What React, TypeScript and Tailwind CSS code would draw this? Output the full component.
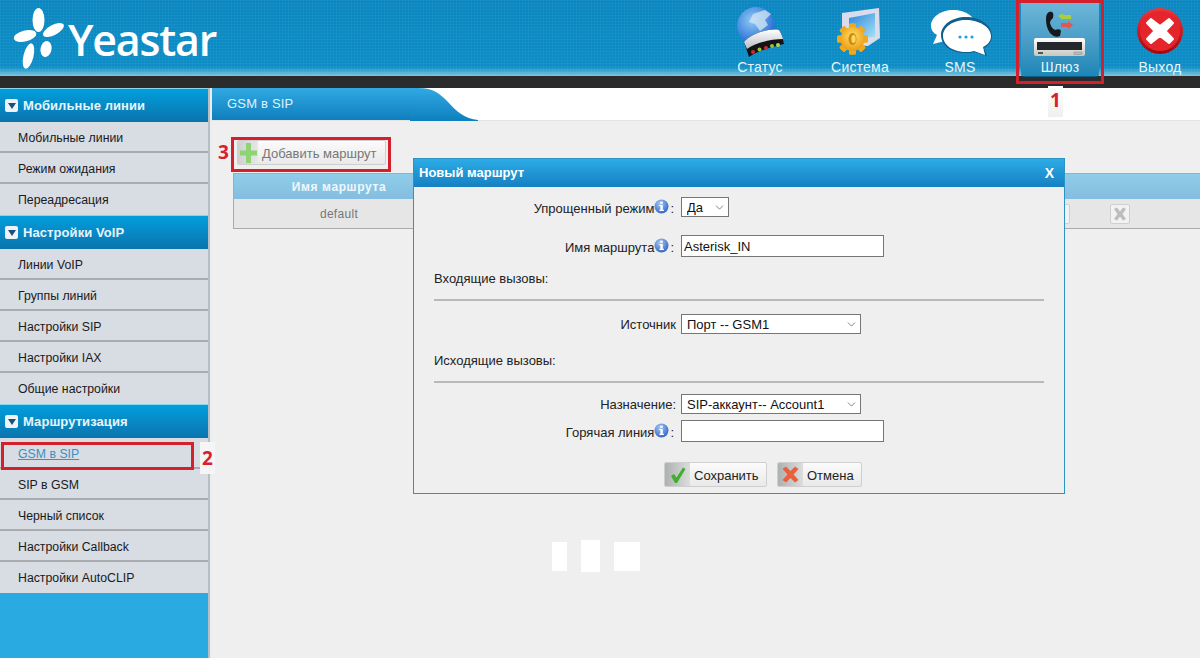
import { ChevronDown } from "lucide-react";

const sections = [
  { title: "Мобильные линии", items: ["Мобильные линии", "Режим ожидания", "Переадресация"] },
  { title: "Настройки VoIP", items: ["Линии VoIP", "Группы линий", "Настройки SIP", "Настройки IAX", "Общие настройки"] },
  { title: "Маршрутизация", items: ["GSM в SIP", "SIP в GSM", "Черный список", "Настройки Callback", "Настройки AutoCLIP"] },
];

const gearTeeth = [0, 45, 90, 135, 180, 225, 270, 315];

function Logo() {
  return (
    <div className="flex items-start pl-[14px] pt-[8px]">
      <svg width="54" height="62" viewBox="14 8 54 62" className="shrink-0">
        <g fill="#fff">
          <ellipse cx="38.5" cy="20" rx="6" ry="12" />
          <ellipse cx="25" cy="36" rx="11.5" ry="5.5" transform="rotate(-14 25 36)" />
          <ellipse cx="53.5" cy="30" rx="11.5" ry="5" transform="rotate(-28 53.5 30)" />
          <ellipse cx="28.5" cy="56" rx="5" ry="13" transform="rotate(14 28.5 56)" />
          <ellipse cx="46" cy="49" rx="5.5" ry="8" transform="rotate(10 46 49)" />
        </g>
      </svg>
      <span className="font-['Open_Sans'] text-[43px] leading-none text-white tracking-[-1.2px] font-semibold mt-[10px]">Yeastar</span>
    </div>
  );
}

function StatusIcon() {
  return (
    <svg width="78" height="57" viewBox="721 2 78 57">
      <defs>
        <radialGradient id="globe" cx="40%" cy="35%" r="70%">
          <stop offset="0" stopColor="#8ecbf5" />
          <stop offset="1" stopColor="#1c62d0" />
        </radialGradient>
        <linearGradient id="router" x1="0" y1="0" x2="0" y2="1">
          <stop offset="0" stopColor="#ffffff" />
          <stop offset="1" stopColor="#b9bcc0" />
        </linearGradient>
      </defs>
      <circle cx="756" cy="26" r="19" fill="url(#globe)" />
      <path d="M753 14 L765 10 L771 14 L765 20 L768 25 L760 31 L755 24 L749 22 Z" fill="#d5e6f3" opacity="0.75" />
      <path d="M744 42 C752 33 770 28 779 30 C782 34 783 40 784 44 C772 47 757 51 749 57 Z" fill="#141417" />
      <path d="M744 42 C752 33 770 28 779 30 C781 33 782 36 783 39 C771 39 755 43 747 49 Z" fill="url(#router)" />
      <circle cx="753" cy="52" r="2" fill="#d42a2a" />
      <circle cx="759.5" cy="49.5" r="2" fill="#9ac13a" />
      <circle cx="766" cy="48" r="2" fill="#d42a2a" />
      <circle cx="772" cy="46" r="2" fill="#9ac13a" />
      <circle cx="778" cy="45" r="2" fill="#b9d24a" />
    </svg>
  );
}

function SystemIcon() {
  return (
    <svg width="78" height="57" viewBox="821 2 78 57">
      <defs>
        <linearGradient id="screen" x1="0" y1="0" x2="1" y2="1">
          <stop offset="0" stopColor="#2a86dc" />
          <stop offset="1" stopColor="#a8e0f5" />
        </linearGradient>
        <radialGradient id="gear" cx="50%" cy="40%" r="60%">
          <stop offset="0" stopColor="#ffdf6a" />
          <stop offset="1" stopColor="#eb9c12" />
        </radialGradient>
      </defs>
      <path d="M842 13 L879 8 L880 38 L868 46 L842 44 Z" fill="#d8dcec" />
      <path d="M849 18 L875 13 L875 37 L849 38 Z" fill="url(#screen)" />
      <g fill="#f0a81c">
        {gearTeeth.map((a) => (
          <rect key={a} x="849" y="23.5" width="7" height="31" rx="1.5" transform={"rotate(" + a + " 852.5 39)"} />
        ))}
      </g>
      <circle cx="852.5" cy="39" r="12" fill="url(#gear)" />
      <ellipse cx="852.5" cy="39" rx="4" ry="6" fill="#c98a10" />
      <ellipse cx="853.5" cy="39" rx="2.2" ry="4" fill="#ffd75a" />
    </svg>
  );
}

function SmsIcon() {
  return (
    <svg width="78" height="57" viewBox="921 2 78 57">
      <path d="M953 10 C966 10 976 17 976 27 C976 37 966 42 953 42 C950 42 947 42 945 41 L933 44 L937 35 C933 33 931 30 931 26 C931 17 941 10 953 10 Z" fill="#fff" />
      <path d="M966 17 C980 17 992 25 992 36 C992 42 988 46 984 48 L987 56 L974 52 C971 53 968 53 966 53 C952 53 941 46 941 35 C941 25 952 17 966 17 Z" fill="#0f5f8c" />
      <path d="M966 20 C979 20 991 27 991 36 C991 42 987 45 983 47 L985 55 L974 51 C971 52 968 52 966 52 C953 52 943 45 943 36 C943 27 953 20 966 20 Z" fill="#fff" />
      <circle cx="960" cy="37" r="1.6" fill="#2a9fd6" />
      <circle cx="966" cy="37" r="1.6" fill="#2a9fd6" />
      <circle cx="972" cy="37" r="1.6" fill="#2a9fd6" />
    </svg>
  );
}

function GatewayIcon() {
  return (
    <svg width="78" height="57" viewBox="1021 2 78 57">
      <defs>
        <linearGradient id="box" x1="0" y1="0" x2="0" y2="1">
          <stop offset="0" stopColor="#ffffff" />
          <stop offset="1" stopColor="#c8c8c0" />
        </linearGradient>
      </defs>
      <path d="M1049 12 C1053 11 1054 13 1053 18 C1051 20 1050 21 1050 23 C1051 27 1053 29 1055 30 C1058 29 1060 29 1061 31 L1060 36 C1056 38 1053 36 1050 33 C1047 29 1046 24 1046 19 C1046 15 1047 13 1049 12 Z" fill="#16181c" />
      <path d="M1058 16 L1063 13 L1063 15 L1071 15 L1071 19 L1063 19 L1063 20 Z" fill="#a9cf3f" />
      <path d="M1073 25 L1068 21 L1068 23 L1061 23 L1061 27 L1068 27 L1068 29 Z" fill="#e4574f" />
      <rect x="1034" y="38" width="51" height="18" rx="2" fill="url(#box)" />
      <rect x="1037" y="42" width="45" height="8" fill="#24282c" />
      <rect x="1038" y="52" width="5" height="2" fill="#555" />
      <rect x="1074" y="52" width="8" height="2.5" fill="#bbb" stroke="#888" strokeWidth="0.5" />
    </svg>
  );
}

function ExitIcon() {
  return (
    <svg width="78" height="57" viewBox="1121 2 78 57">
      <defs>
        <linearGradient id="redc" x1="0" y1="0" x2="0" y2="1">
          <stop offset="0" stopColor="#f0353a" />
          <stop offset="1" stopColor="#a8040c" />
        </linearGradient>
      </defs>
      <circle cx="1160" cy="31" r="23" fill="url(#redc)" />
      <circle cx="1160" cy="31" r="20" fill="#e5252c" />
      <path d="M1151 19 L1160 26 L1169 19 L1173 23 L1165.5 31 L1173 39 L1169 43 L1160 36 L1151 43 L1147 39 L1154.5 31 L1147 23 Z" fill="#fff" stroke="#fff" strokeLinejoin="round" strokeWidth="2" />
    </svg>
  );
}

function NavItem({ label, active, children }: { label: string; active?: boolean; children: React.ReactNode }) {
  return (
    <div
      className={
        "w-[78px] h-[76px] border-t-2 border-transparent bg-clip-padding flex flex-col items-center " +
        (active ? "bg-linear-to-b from-[#6fb7d9] to-[#1a86b6] rounded-b-[4px] shadow-[0_1px_0_#0b5d85]" : "")
      }
    >
      <div className="h-[57px]">{children}</div>
      <span className="text-[14px] leading-[16px] tracking-[0.2px] text-[#e8f6fc]">{label}</span>
    </div>
  );
}

function InfoIcon() {
  return (
    <svg width="15" height="15" viewBox="0 0 15 15" className="shrink-0 -mt-[5px]">
      <defs>
        <radialGradient id="inf" cx="40%" cy="30%" r="75%">
          <stop offset="0" stopColor="#a9c8f2" />
          <stop offset="1" stopColor="#2c62c4" />
        </radialGradient>
      </defs>
      <circle cx="7.5" cy="7.5" r="7" fill="url(#inf)" />
      <rect x="6.3" y="2.6" width="2.4" height="2.2" fill="#fff" />
      <path d="M5.4 6 H8.8 V10.8 H9.9 V12 H5.4 V10.8 H6.4 V7.2 H5.4 Z" fill="#fff" />
    </svg>
  );
}

function IconButton({ label, icon, className, iconClass, textClass }: { label: string; icon: React.ReactNode; className: string; iconClass: string; textClass: string }) {
  return (
    <button type="button" className={"flex items-stretch h-[25px] rounded-[2px] border border-[#cfcfcf] bg-linear-to-b from-[#fbfbfb] to-[#e9e9e9] overflow-hidden " + className}>
      <span className={"bg-linear-to-r flex items-center justify-center shrink-0 " + iconClass}>{icon}</span>
      <span className={"pl-[4px] leading-[25px] text-[13px] " + textClass}>{label}</span>
    </button>
  );
}

function Select({ value, className }: { value: string; className: string }) {
  return (
    <div className={"relative h-[20px] " + className}>
      <select className="block appearance-none w-full h-full bg-white border border-[#767676] pl-[5px] text-[13px] text-[#111] outline-none">
        <option>{value}</option>
      </select>
      <ChevronDown size={13} strokeWidth={1.2} className="absolute right-[3px] top-[4px] text-[#444]" />
    </div>
  );
}

function Label({ text, info }: { text: string; info?: boolean }) {
  return (
    <div className={"w-[267px] shrink-0 flex items-center justify-end text-[13px] text-[#222] pr-[5px] " + (info ? "pt-[4px]" : "pt-[2px]")}>
      <span className="flex items-center">
        {text}
        {info && <InfoIcon />}
        {info && <span className="ml-[1px] mr-[2px]">:</span>}
      </span>
    </div>
  );
}

export default function App() {
  return (
    <div className="relative w-[1200px] h-[658px] overflow-hidden bg-[#efefef] font-['Liberation_Sans',Arial,sans-serif]">
      {/* Header */}
      <div className="h-[76px] flex justify-between bg-[image:repeating-linear-gradient(0deg,rgba(255,255,255,0.04)_0_1px,transparent_1px_3px),repeating-linear-gradient(90deg,rgba(255,255,255,0.04)_0_1px,transparent_1px_3px),linear-gradient(to_bottom,#0a86c0,#0b8dc6_88%,#7cc4dc)]">
        <Logo />
        <div className="flex gap-[22px] pr-[1px]">
          <NavItem label="Статус"><StatusIcon /></NavItem>
          <NavItem label="Система"><SystemIcon /></NavItem>
          <NavItem label="SMS"><SmsIcon /></NavItem>
          <NavItem label="Шлюз" active><GatewayIcon /></NavItem>
          <NavItem label="Выход"><ExitIcon /></NavItem>
        </div>
      </div>
      <div className="h-[12px] bg-[#2b2b2b]"></div>

      <div className="flex h-[570px]">
        {/* Sidebar */}
        <div className="w-[208px] shrink-0 flex flex-col bg-[#29abe2]">
          {sections.map((s) => (
            <div key={s.title}>
              <div className="h-[34px] flex items-center gap-[5px] pl-[5px] border-t border-[#86d6f2] bg-linear-to-b from-[#019fdc] to-[#0a74ae]">
                <span className="w-[13px] h-[13px] rounded-[2px] bg-[#eef3f7] flex items-center justify-center">
                  <span className="w-0 h-0 border-l-[4px] border-r-[4px] border-t-[6px] border-l-transparent border-r-transparent border-t-[#1d4e7d]"></span>
                </span>
                <span className="text-[13px] font-bold text-[#e6f5fb] tracking-[0.08px]">{s.title}</span>
              </div>
              {s.items.map((item, i) => (
                <div
                  key={item}
                  className={
                    "h-[31px] pl-[18px] flex items-center bg-[#d8dce3] text-[12.3px] " +
                    (i < s.items.length - 1 ? "border-b-2 border-[#a9abae] pt-[4px] " : "pt-[2px] ") +
                    (item === "GSM в SIP" ? "text-[#3b8fc4] underline" : "text-[#1a1a1a]")
                  }
                >
                  {item}
                </div>
              ))}
            </div>
          ))}
        </div>
        <div className="w-[4px] shrink-0 bg-[#e9eef1] border-l-2 border-[#b8bec2]"></div>

        {/* Content */}
        <div className="flex-1 min-w-0 flex flex-col">
          <div className="flex h-[33px] bg-white border-b border-[#e4e4e4]">
            <div className="w-[198px] bg-linear-to-b from-[#30a9e2] to-[#0e7fbe] pl-[15px] flex items-center text-[13px] tracking-[0.2px] text-[#dff2fb]">
              GSM в SIP
            </div>
            <svg width="68" height="33" viewBox="0 0 68 33" className="shrink-0">
              <defs>
                <linearGradient id="tab" x1="0" y1="0" x2="0" y2="1">
                  <stop offset="0" stopColor="#30a9e2" />
                  <stop offset="1" stopColor="#0e7fbe" />
                </linearGradient>
              </defs>
              <path d="M0 0 H8 C24 0 30 6 38 14 C46 23 55 31 68 32 V33 H0 Z" fill="url(#tab)" />
            </svg>
          </div>

          <div className="pt-[19px] pl-[25px]">
            <IconButton
              label="Добавить маршрут"
              textClass="text-[#777]"
              iconClass="w-[20px] from-[#cfd1d1] to-[#e6e7e7]"
              className="w-[149px]"
              icon={
                <svg width="17" height="20" viewBox="0 0 17 20">
                  <path d="M6 0 H11 V7.5 H17 V12.5 H11 V20 H6 V12.5 H0 V7.5 H6 Z" fill="#8ed472" />
                </svg>
              }
            />
          </div>

          <div className="mt-[8px] ml-[21px]">
            <div className="h-[26px] flex items-center border-t border-l border-[#aaa] bg-linear-to-b from-[#8fcdea] to-[#84bde0]">
              <div className="w-[210px] text-center text-[12px] font-bold tracking-[0.6px] text-[#eef8fc]">Имя маршрута</div>
            </div>
            <div className="h-[30px] flex items-center justify-between pr-[70px] border-l border-b border-[#aaa] bg-[#e6e6e6]">
              <div className="w-[210px] text-center text-[12px] tracking-[0.3px] text-[#777]">default</div>
              <div className="flex gap-[40px]">
                <span className="w-[20px] h-[20px] border border-[#cfcfcf] rounded-[2px] bg-[#f2f2f2]"></span>
                <span className="w-[20px] h-[20px] border border-[#cfcfcf] rounded-[2px] bg-[#f2f2f2] flex items-center justify-center">
                  <svg width="16" height="16" viewBox="0 0 16 16">
                    <path d="M2 3 L5 1.5 L8 5.5 L11 1.5 L14 3 L10.5 8 L14 13 L11 14.5 L8 10.5 L5 14.5 L2 13 L5.5 8 Z" fill="#bdbdbd" />
                  </svg>
                </span>
              </div>
            </div>
          </div>
        </div>
      </div>

      {/* Modal */}
      <div className="absolute left-[413px] top-[158px] w-[652px] h-[336px] border border-[#2a94c4] bg-[#efefef] flex flex-col">
        <div className="h-[28px] shrink-0 flex items-center justify-between pl-[5px] pr-[10px] bg-linear-to-b from-[#2cace6] to-[#1680c2] text-white font-bold text-[13px]">
          <span>Новый маршрут</span>
          <span className="text-[14px]">X</span>
        </div>
        <div className="flex mt-[10px] items-center h-[20px]">
          <Label text="Упрощенный режим" info />
          <Select value="Да" className="w-[48px]" />
        </div>
        <div className="flex mt-[18px] items-center h-[22px]">
          <Label text="Имя маршрута" info />
          <input readOnly value="Asterisk_IN" className="w-[203px] h-[22px] bg-white border border-[#767676] pl-[2px] text-[13px] text-[#111] outline-none" />
        </div>
        <div className="pl-[20px] pr-[20px] mt-[14px] text-[13px] text-[#222]">
          <div className="leading-[16px]">Входящие вызовы:</div>
          <div className="mt-[12px] h-[2px] bg-[#b9b9b9]"></div>
        </div>
        <div className="flex mt-[13px] items-center h-[20px]">
          <Label text="Источник" />
          <Select value="Порт -- GSM1" className="w-[180px]" />
        </div>
        <div className="pl-[20px] pr-[20px] mt-[19px] text-[13px] text-[#222]">
          <div className="leading-[16px]">Исходящие вызовы:</div>
          <div className="mt-[12px] h-[2px] bg-[#b9b9b9]"></div>
        </div>
        <div className="flex mt-[11px] items-center h-[20px]">
          <Label text="Назначение:" />
          <Select value="SIP-аккаунт-- Account1" className="w-[180px]" />
        </div>
        <div className="flex mt-[6px] items-center h-[22px]">
          <Label text="Горячая линия" info />
          <input readOnly value="" className="w-[203px] h-[22px] bg-white border border-[#767676] outline-none" />
        </div>
        <div className="flex mt-[20px] pl-[250px] gap-[10px]">
          <IconButton
            label="Сохранить"
            textClass="text-[#222]"
            iconClass="w-[25px] from-[#aeb1b1] to-[#dcdedd]"
            className="w-[103px]"
            icon={
              <svg width="18" height="18" viewBox="0 0 18 18">
                <path d="M2 10 L5 8 L7.5 11.5 L14 1.5 L16.5 3 L8 17 L6 17 Z" fill="#3fb02e" />
              </svg>
            }
          />
          <IconButton
            label="Отмена"
            textClass="text-[#222]"
            iconClass="w-[25px] from-[#aeb1b1] to-[#dcdedd]"
            className="w-[85px]"
            icon={
              <svg width="19" height="19" viewBox="0 0 19 19">
                <path d="M1.5 4 L5 1.5 L9.5 6 L14 1.5 L17.5 4 L12.5 9.5 L17.5 15 L14 17.5 L9.5 13 L5 17.5 L1.5 15 L6.5 9.5 Z" fill="#e9603a" />
              </svg>
            }
          />
        </div>
      </div>

      {/* Red annotation frames */}
      <div className="absolute left-[1016px] top-0 w-[88px] h-[84px] border-[3px] border-[#d3202c]"></div>
      <div className="absolute left-[1048px] top-[86px] w-[15px] h-[31px] bg-linear-to-b from-white to-[#efefef] text-center text-[#d8202c] font-['Open_Sans'] font-bold text-[19px] leading-[28px]">1</div>
      <div className="absolute left-[1px] top-[442px] w-[193px] h-[28px] border-[3px] border-[#d3202c]"></div>
      <div className="absolute left-[200px] top-[442px] w-[15px] h-[32px] bg-[#f5f5f5] text-center text-[#d8202c] font-['Open_Sans'] font-bold text-[19px] leading-[32px]">2</div>
      <div className="absolute left-[231px] top-[137px] w-[160px] h-[35px] border-[3px] border-[#d3202c]"></div>
      <div className="absolute left-[218px] top-[140px] text-[#d8202c] font-['Open_Sans'] font-bold text-[19px] leading-[24px]">3</div>

      {/* White blocks */}
      <div className="absolute left-[552px] top-[540px] flex items-center gap-[14px]">
        <div className="w-[15px] h-[29px] bg-white"></div>
        <div className="w-[19px] h-[32px] bg-white"></div>
        <div className="w-[26px] h-[29px] bg-white"></div>
      </div>
    </div>
  );
}
